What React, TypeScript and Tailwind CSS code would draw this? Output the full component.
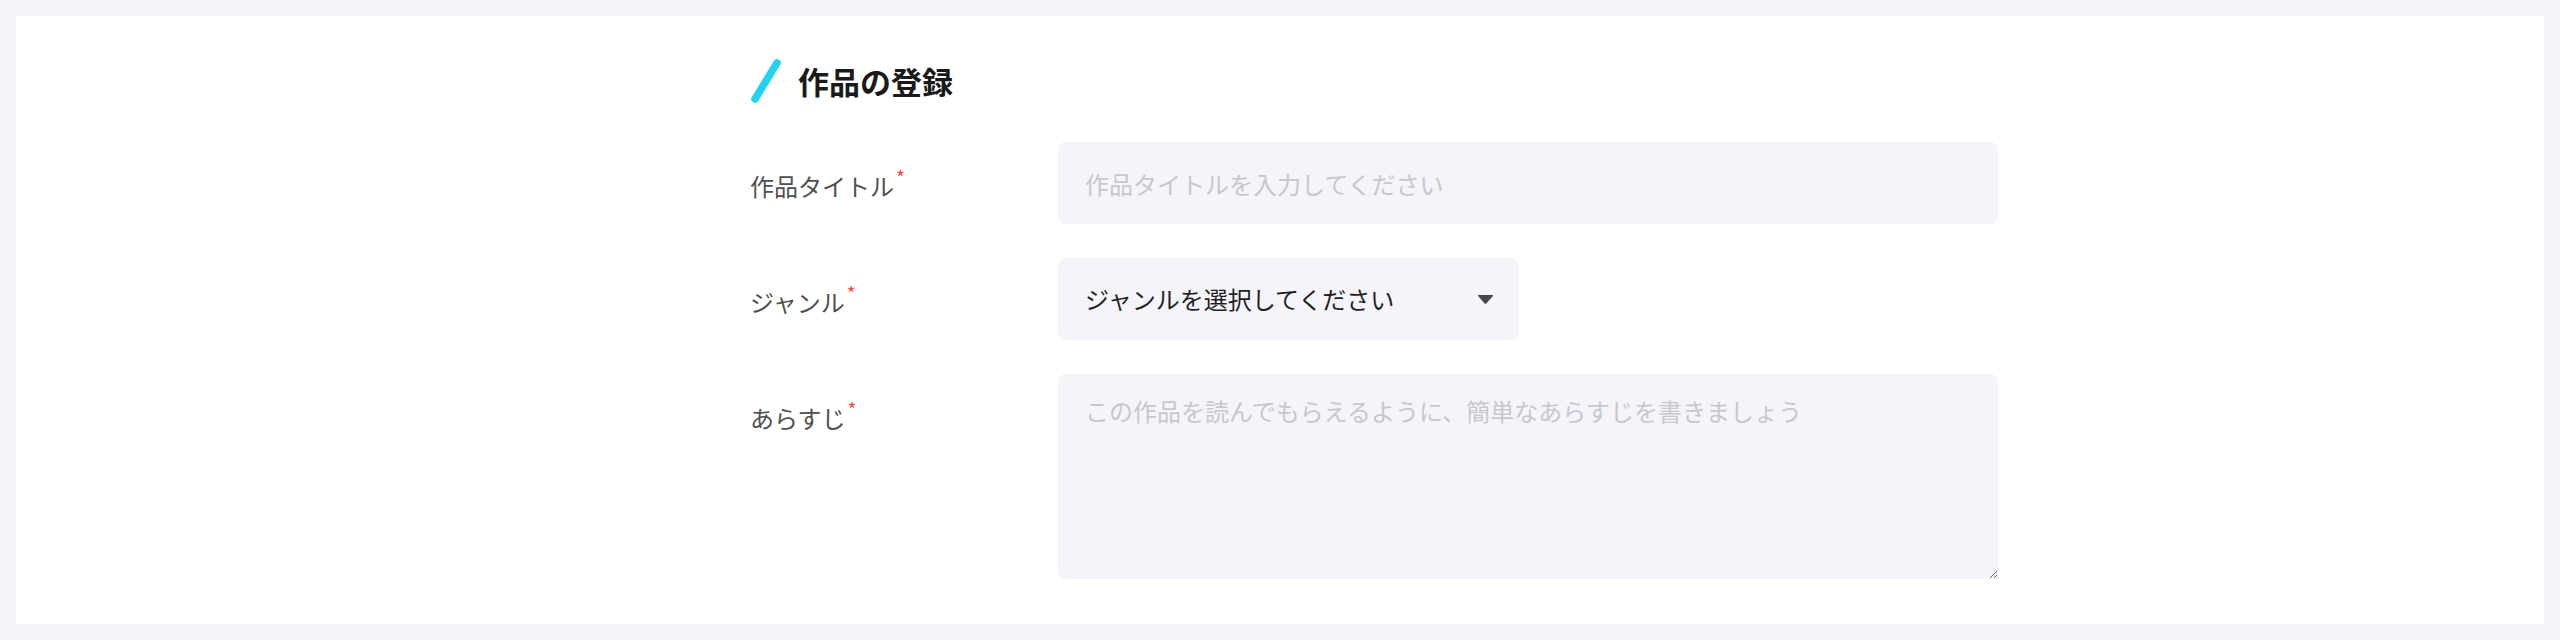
const font = {
  fontFamily: '"Noto Sans CJK JP", "Noto Sans", sans-serif',
};

function Label({ text }: { text: string }) {
  return (
    <div className="flex w-[308px] shrink-0 items-start pt-[26px]">
      <span className="text-[24px] leading-[36px] text-[#4f4f4f]">{text}</span>
      <span className="ml-[2px] -mt-[1px] text-[19px] leading-none text-[#ff4a4a]">*</span>
    </div>
  );
}

export default function App() {
  return (
    <div className="min-h-[640px] bg-[#f5f4fa] p-4" style={font}>
      <div className="bg-white pt-[42px] pb-[45px]">
        <div className="mx-auto w-[1060px]">
          <div className="flex h-[45px] items-center gap-4">
            <svg width="32" height="46" viewBox="0 0 32 46">
              <line x1="27" y1="5" x2="5" y2="41" stroke="#22d3ee" strokeWidth="7.5" strokeLinecap="round" />
            </svg>
            <h1 className="text-[31px] font-bold leading-none text-[#1a1a1a]">作品の登録</h1>
          </div>

          <div className="mt-[39px] flex w-[1248px] flex-col gap-[34px]">
            <div className="flex">
              <Label text="作品タイトル" />
              <input
                className="h-[82px] w-[940px] rounded-lg bg-[#f5f4fa] px-[27px] text-[24px] text-[#1f1f1f] outline-none placeholder:text-[#c8c7cd]"
                placeholder="作品タイトルを入力してください"
              />
            </div>

            <div className="flex">
              <Label text="ジャンル" />
              <div className="flex h-[82px] w-[461px] items-center justify-between rounded-lg bg-[#f5f4fa] pl-[27px] pr-[25px]">
                <span className="text-[24px] text-[#1f1f1f]">ジャンルを選択してください</span>
                <svg width="17" height="11" viewBox="0 0 17 11">
                  <path d="M1.5 1 H15.5 Q16.6 1 15.9 2 L9.3 9.6 Q8.5 10.4 7.7 9.6 L1.1 2 Q0.4 1 1.5 1 Z" fill="#474747" />
                </svg>
              </div>
            </div>

            <div className="flex">
              <Label text="あらすじ" />
              <textarea
                className="h-[205px] w-[940px] rounded-lg bg-[#f5f4fa] px-[27px] pt-[19px] text-[24px] leading-[36px] text-[#1f1f1f] outline-none placeholder:text-[#c8c7cd]"
                placeholder="この作品を読んでもらえるように、簡単なあらすじを書きましょう"
              />
            </div>
          </div>
        </div>
      </div>
    </div>
  );
}
